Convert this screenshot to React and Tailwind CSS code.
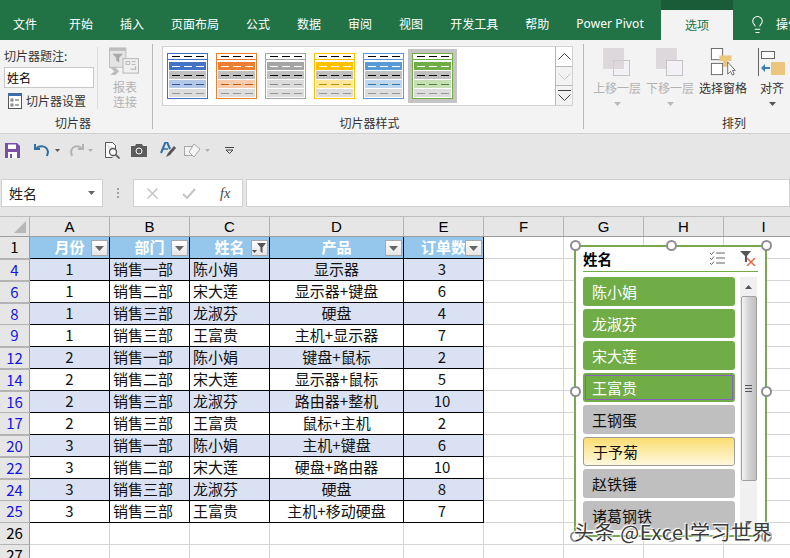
import React from "react";
import { Lightbulb } from "lucide-react";

const tabs = ["开始","插入","页面布局","公式","数据","审阅","视图","开发工具","帮助","Power Pivot"];
const rows = [
  [4,1,"销售一部","陈小娟","显示器",3,1],[6,1,"销售二部","宋大莲","显示器+键盘",6,0],[8,1,"销售三部","龙淑芬","硬盘",4,1],[9,1,"销售三部","王富贵","主机+显示器",7,0],
  [12,2,"销售一部","陈小娟","键盘+鼠标",2,1],[14,2,"销售二部","宋大莲","显示器+鼠标",5,0],[16,2,"销售三部","龙淑芬","路由器+整机",10,1],[17,2,"销售三部","王富贵","鼠标+主机",2,0],
  [20,3,"销售一部","陈小娟","主机+键盘",6,1],[22,3,"销售二部","宋大莲","硬盘+路由器",10,0],[24,3,"销售三部","龙淑芬","硬盘",8,1],[25,3,"销售三部","王富贵","主机+移动硬盘",7,0],
];
const swatches = [
  { b:"#4472c4", c:"#b4c7e7", d:"#2f5597" },
  { b:"#ed7d31", c:"#f8cbad", d:"#c55a11" },
  { b:"#a5a5a5", c:"#dbdbdb", d:"#8a8a8a" },
  { b:"#ffc000", c:"#ffe699", d:"#bf9000" },
  { b:"#5b9bd5", c:"#bdd7ee", d:"#2e75b6" },
  { b:"#70ad47", c:"#c5e0b4", d:"#548235" },
];
const dashes = (color) => (
  <div className="flex justify-center gap-[4px]">
    {[0,1,2].map(i => <span key={i} className="block w-[8px] h-px" style={{ background: color }} />)}
  </div>
);
function Bar({ bg, dash }) {
  return <div className="h-[8px] flex items-center justify-center" style={{ background: bg }}>{dashes(dash)}</div>;
}
function Swatch({ s }) {
  return (
    <div className="w-[41px] h-[46px] border bg-white flex flex-col shrink-0" style={{ borderColor: s.b }}>
      <div className="h-[8px] flex items-center justify-center">{dashes("#000")}</div>
      <div className="h-px" style={{ background: s.b }} />
      <div className="flex flex-col gap-px p-px pt-[2px]">
        <Bar bg={s.b} dash="#fff" />
        <Bar bg="#c0c0c0" dash="#000" />
        <Bar bg={s.c} dash={s.d} />
        <Bar bg="#dcdcdc" dash="#999" />
      </div>
    </div>
  );
}
function FilterBtn({ active }) {
  return (
    <span className="absolute right-px top-[3px] w-[17px] h-[16px] border border-[#a8a8a8] bg-gradient-to-b from-white to-[#e4e4e4] flex items-center justify-center">
      {active ? (
        <svg width="15" height="12" viewBox="0 0 15 12"><path d="M5 1h9L10.5 5.5V11L8.5 9.5v-4z" fill="#555"/><path d="M0 8h5L2.5 11z" fill="#555"/></svg>
      ) : (
        <svg width="9" height="5" viewBox="0 0 9 5"><path d="M0 0h9L4.5 5z" fill="#666"/></svg>
      )}
    </span>
  );
}
const colH = [["A",80],["B",80],["C",80],["D",134],["E",80],["F",80],["G",80],["H",80],["I",80]];
const latin = "font-['Liberation_Sans','Noto_Sans_CJK_SC',sans-serif]";

function EmptyCols() {
  return (
    <>
      <div className="w-[80px] shrink-0 h-full border-r border-b border-[#d4d4d4]" />
      <div className="w-[80px] shrink-0 h-full border-r border-b border-[#d4d4d4]" />
      <div className="w-[80px] shrink-0 h-full border-r border-b border-[#d4d4d4]" />
      <div className="w-[80px] shrink-0 h-full border-b border-r border-[#d4d4d4]" />
    </>
  );
}
function RowHead({ n, blue, gap }) {
  return (
    <div className={`w-[30px] shrink-0 h-full bg-[#e6e6e6] border-r border-r-[#9c9c9c] border-b border-b-[#b4b4b4] flex items-center justify-center text-[15px] ${gap ? "border-t border-t-[#b4b4b4]" : ""} ${blue ? "text-[#1414e6]" : "text-black"}`}>{n}</div>
  );
}
function Pill({ children, variant, mark }) {
  const cls = variant === "on" ? "bg-[#70ad47] text-white rounded-[3px]"
    : variant === "off" ? "bg-[#bfbfbf] text-[#111] rounded-[3px]"
    : "bg-gradient-to-b from-[#fbdd6e] to-[#fff8dc] text-[#111] border border-[#9c9c9c] rounded-[3px]";
  return (
    <div className={`relative h-[29px] shrink-0 flex items-center pl-[9px] pt-[1px] text-[15px] ${cls}`}>
      {mark && <span className="absolute inset-[2px] border border-[#8b5fbf]" />}
      <span className="relative">{children}</span>
    </div>
  );
}
function Handle({ cls }) {
  return <span className={`absolute w-[11px] h-[11px] rounded-full bg-white border-2 border-[#8f8f8f] ${cls}`} />;
}
function Caret({ light }) {
  return <svg width="7" height="4" viewBox="0 0 7 4" className="mt-[6px]"><path d="M0 0h7L3.5 4z" fill={light ? "#b8b8b8" : "#555"} /></svg>;
}

export default function App() {
  return (
    <div className={`relative w-[790px] h-[558px] overflow-hidden bg-white text-black ${latin}`}>
      {/* tab bar */}
      <div className="h-[40px] bg-[#217346] flex text-[12px] text-white whitespace-nowrap font-['Noto_Sans_CJK_SC','Noto_Sans',sans-serif]">
        <div className="pl-[13px] pr-[32px] flex items-center h-full pt-[8px] shrink-0">文件</div>
        <div className="flex items-center gap-[27px] h-full pt-[8px] shrink-0 w-[592px]">
          {tabs.map(t => <span key={t} className={`shrink-0 ${t === "Power Pivot" ? "tracking-[0.1px] font-['Noto_Sans',sans-serif]" : ""}`}>{t}</span>)}
        </div>
        <div className="w-[72px] flex flex-col h-full shrink-0">
          <div className="h-[10px] bg-[#1a5c38]" />
          <div className="flex-1 bg-[#f3f3f3] text-[#217346] flex items-center justify-center">选项</div>
        </div>
        <div className="flex items-center pl-[15px] gap-[9px] pt-[8px] shrink-0">
          <Lightbulb size={19} strokeWidth={1.3} />
          <span>操作</span>
        </div>
      </div>

      {/* ribbon */}
      <div className="h-[94px] bg-[#f3f3f3] border-b border-[#cfcfcf] flex text-[12px] text-[#333] font-['Noto_Sans_CJK_SC',sans-serif]">
        {/* group 1 */}
        <div className="w-[153px] shrink-0 flex flex-col my-[4px] border-r border-[#b8b8b8]">
          <div className="flex h-[65px] pt-[3px]">
            <div className="w-[98px] border-r border-[#dcdcdc] pl-[4px] flex flex-col">
              <div className="leading-[18px]">切片器题注:</div>
              <div className="w-[90px] h-[21px] mt-[2px] bg-white border border-[#c8c8c8] pl-[2px] text-[12px] leading-[19px] text-black">姓名</div>
              <div className="flex items-center gap-[4px] mt-[4px] pl-[4px]">
                <svg width="14" height="16" viewBox="0 0 14 16"><rect x=".5" y=".5" width="13" height="15" fill="#fff" stroke="#555"/><rect x="0" y="0" width="14" height="3" fill="#3d6da8"/><rect x="3" y="6" width="2" height="2" fill="none" stroke="#555" strokeWidth=".8"/><rect x="3" y="11" width="2" height="2" fill="none" stroke="#555" strokeWidth=".8"/><path d="M7 7h4M7 12h4" stroke="#555"/></svg>
                <span>切片器设置</span>
              </div>
            </div>
            <div className="flex-1 flex flex-col items-center text-[#b2b2b2] leading-[15px]">
              <svg width="32" height="30" viewBox="0 0 32 30" className="mb-[3px] mr-[2px]">
                <rect x="1" y="1" width="17" height="20" fill="#e4e4e4" stroke="#bdbdbd" /><rect x="1" y="1" width="17" height="3" fill="#bdbdbd"/>
                <path d="M4 7h11l-4 4v5l-3-2v-3z" fill="#a8a8a8"/>
                <rect x="15" y="12" width="16" height="15" fill="#efefef" stroke="#b5b5b5"/><path d="M18 15h4v3h-4zM24 15h4M24 18h4" stroke="#b5b5b5" fill="none"/><path d="M28 20v3h-5" stroke="#a8a8a8" fill="none"/>
                <path d="M1 21h6l4 4-4 4H2l4-4z" fill="#bdbdbd"/>
              </svg>
              <span>报表</span><span>连接</span>
            </div>
          </div>
          <div className="text-center pr-[6px] mt-auto leading-[12px]">切片器</div>
        </div>
        {/* group 2 */}
        <div className="w-[431px] shrink-0 flex flex-col my-[4px] border-r border-[#b8b8b8] pl-[9px]">
          <div className="flex h-[60px] mt-[2px] w-[411px] bg-white border border-[#d2d2d2]">
            <div className="flex-1 flex items-center pl-[4px] gap-[8px]">
              {swatches.slice(0,5).map(s => <Swatch key={s.b} s={s} />)}
              <div className="w-[49px] h-[54px] -ml-[4px] bg-[#c4c4c4] flex items-center justify-center"><Swatch s={swatches[5]} /></div>
            </div>
            <div className="w-[17px] flex flex-col border-l border-[#b8b8b8]">
              <div className="h-[20px] border-b border-[#b8b8b8] flex items-center justify-center"><svg width="13" height="7" viewBox="0 0 13 7"><path d="M.5 6.5l6-6 6 6" fill="none" stroke="#444"/></svg></div>
              <div className="h-[19px] bg-[#f3f3f3] border-b border-[#b8b8b8] flex items-center justify-center"><svg width="13" height="7" viewBox="0 0 13 7"><path d="M.5 .5l6 6 6-6" fill="none" stroke="#c8c8c8"/></svg></div>
              <div className="flex-1 bg-[#f3f3f3] flex flex-col items-center justify-center gap-[3px]"><span className="block w-[13px] h-px bg-[#444]"/><svg width="13" height="7" viewBox="0 0 13 7"><path d="M.5 .5l6 6 6-6" fill="none" stroke="#444"/></svg></div>
            </div>
          </div>
          <div className="text-center pr-[6px] mt-auto leading-[12px]">切片器样式</div>
        </div>
        {/* group 3 */}
        <div className="flex-1 flex flex-col my-[4px] relative">
          <div className="flex h-[65px] pl-[9px] gap-[5px] pt-[4px] text-[#b2b2b2] leading-[16px]">
            <div className="w-[48px] flex flex-col items-center shrink-0">
              <svg width="28" height="28" viewBox="0 0 28 28"><rect x="0" y="0" width="21" height="21" fill="#dcd8dc"/><rect x="10.500" y="12.500" width="16" height="15" fill="#f4f1f6" stroke="#c4c2c4"/><rect x="10.500" y="12.500" width="10.500" height="8.500" fill="#dcd8dc"/></svg>
              <span className="whitespace-nowrap mt-[4px]">上移一层</span><Caret light />
            </div>
            <div className="w-[48px] flex flex-col items-center shrink-0">
              <svg width="28" height="28" viewBox="0 0 28 28"><rect x="0" y="0" width="21" height="21" fill="#dcd8dc"/><rect x="10.500" y="12.500" width="16" height="15" fill="#f4f1f6" stroke="#c4c2c4"/></svg>
              <span className="whitespace-nowrap mt-[4px]">下移一层</span><Caret light />
            </div>
            <div className="w-[48px] flex flex-col items-center shrink-0 text-[#333]">
              <svg width="28" height="28" viewBox="0 0 28 30" className="ml-[1px]"><rect x=".5" y=".5" width="12" height="12" fill="#fff" stroke="#666"/><rect x=".5" y="16.500" width="12" height="12" fill="#fff" stroke="#666"/><path d="M9 8h13v6h-4v6h-5v-6H9z" fill="#ecc67c"/><path d="M18 15v13l3-3 2 4 2-1-2-4h3z" fill="#fff" stroke="#666"/></svg>
              <span className="whitespace-nowrap mt-[4px]">选择窗格</span>
            </div>
            <div className="w-[32px] flex flex-col items-center shrink-0 text-[#333] ml-[4px]">
              <svg width="28" height="28" viewBox="0 0 28 28"><path d="M.5 0v28" stroke="#666"/><rect x="3.500" y="3.500" width="13" height="7" fill="#fff" stroke="#666"/><rect x="13" y="14" width="14" height="13" fill="#ecc67c"/><path d="M3 20l4-4v3h5v2H7v3z" fill="#3d7dbd"/></svg>
              <span className="mt-[4px]">对齐</span><Caret />
            </div>
          </div>
          <div className="absolute left-[138px] bottom-0 leading-[12px]">排列</div>
        </div>
      </div>

      {/* below ribbon */}
      <div className="h-[83px] bg-[#e6e6e6] border-b border-[#bdbdbd] flex flex-col">
        <div className="h-[32px] flex items-center pl-[5px] shrink-0">
          <svg width="15" height="15" viewBox="0 0 15 15"><path d="M0 0h12l3 3v12H0z" fill="#7b4fa6"/><rect x="3" y="1.500" width="8" height="4.500" fill="#fff"/><rect x="3" y="9" width="9" height="6" fill="#fff"/><rect x="5" y="11" width="2" height="4" fill="#7b4fa6"/></svg>
          <svg width="17" height="14" viewBox="0 0 17 14" className="ml-[14px]"><path d="M1 1v5h5" fill="none" stroke="#2f6ea5" strokeWidth="2"/><path d="M2 6c3-4 11-4 12 3l-1 4" fill="none" stroke="#2f6ea5" strokeWidth="2"/></svg>
          <svg width="5" height="3" viewBox="0 0 5 3" className="ml-[4px]"><path d="M0 0h5L2.500 3z" fill="#555"/></svg>
          <svg width="15" height="14" viewBox="0 0 15 14" className="ml-[9px]"><path d="M14 1v5H9" fill="none" stroke="#b2b2b2" strokeWidth="2"/><path d="M13 6C10 2 3 2 2 9l1 4" fill="none" stroke="#b2b2b2" strokeWidth="2"/></svg>
          <svg width="5" height="3" viewBox="0 0 5 3" className="ml-[4px]"><path d="M0 0h5L2.500 3z" fill="#b2b2b2"/></svg>
          <svg width="15" height="17" viewBox="0 0 15 17" className="ml-[12px]"><path d="M.5.500h7l3 3v4M.5.500v15h7" fill="#fff" stroke="#555"/><circle cx="8" cy="10" r="3.500" fill="#fff" stroke="#555" strokeWidth="1.300"/><path d="M10.500 12.500l4 4" stroke="#555" strokeWidth="1.600"/></svg>
          <svg width="16" height="13" viewBox="0 0 16 13" className="ml-[11px]"><path d="M0 2h4l1-2h6l1 2h4v11H0z" fill="#5c5c5c"/><circle cx="8" cy="7" r="3" fill="#5c5c5c" stroke="#fff"/></svg>
          <svg width="16" height="16" viewBox="0 0 16 16" className="ml-[13px]"><path d="M1 11L5.500 0h1.500l3 7" fill="none" stroke="#2f6ea5" strokeWidth="2"/><path d="M3 7h5" stroke="#2f6ea5" strokeWidth="1.500"/><path d="M6 15l2-4 6-7 2 2-6 7z" fill="#555"/></svg>
          <svg width="17" height="15" viewBox="0 0 17 15" className="ml-[8px]"><rect x=".5" y="3.500" width="9" height="9" fill="#f4f4f4" stroke="#a8a8a8"/><path d="M10 1l6 5-6 8-5-5z" fill="#f4f4f4" stroke="#a8a8a8"/></svg>
          <svg width="5" height="3" viewBox="0 0 5 3" className="ml-[4px]"><path d="M0 0h5L2.500 3z" fill="#b2b2b2"/></svg>
          <svg width="9" height="7" viewBox="0 0 9 7" className="ml-[15px]"><path d="M0 .5h9" stroke="#444"/><path d="M1 3h7L4.500 6.500z" fill="none" stroke="#444"/></svg>
        </div>
        <div className="h-[13px] shrink-0" />
        <div className="flex h-[28px] shrink-0 font-['Noto_Sans_CJK_SC',sans-serif]">
          <div className="ml-px w-[102px] bg-white border border-[#d0d0d0] flex items-center justify-between pl-[7px] pr-[7px] text-[14px] text-[#222]">
            <span>姓名</span>
            <svg width="7" height="4" viewBox="0 0 7 4"><path d="M0 0h7L3.500 4z" fill="#666"/></svg>
          </div>
          <div className="w-[30px] flex flex-col items-center justify-center gap-[2px]">
            {[0,1,2].map(i => <span key={i} className="block w-[2px] h-[2px] bg-[#a0a0a0]" />)}
          </div>
          <div className="w-[110px] bg-white border border-[#d0d0d0] flex items-center pl-[13px] gap-[24px]">
            <svg width="11" height="11" viewBox="0 0 11 11"><path d="M.5.500l10 10M10.500.500l-10 10" stroke="#c4c4c4" strokeWidth="1.500"/></svg>
            <svg width="14" height="11" viewBox="0 0 14 11"><path d="M1 6l4 4 8-9" fill="none" stroke="#c4c4c4" strokeWidth="2"/></svg>
            <span className="font-['Liberation_Serif',serif] italic text-[14px] text-[#444]">fx</span>
          </div>
          <div className="ml-[3px] flex-1 bg-white border border-[#d0d0d0]" />
        </div>
      </div>

      {/* column headers */}
      <div className="h-[20px] flex w-[804px] bg-[#e6e6e6] border-b border-[#9c9c9c] text-[15px]">
        <div className="w-[30px] shrink-0 h-full border-r border-[#b4b4b4] flex items-end justify-end pr-[3px] pb-[3px]">
          <svg width="12" height="12" viewBox="0 0 12 12"><path d="M12 0v12H0z" fill="#b8b8b8"/></svg>
        </div>
        {colH.map(([c,w]) => (
          <div key={c} className="h-full shrink-0 border-r border-[#b4b4b4] flex items-center justify-center pt-[1px]" style={{ width: w }}>{c}</div>
        ))}
      </div>

      {/* sheet */}
      <div className="w-[804px] font-['Noto_Sans_CJK_SC',sans-serif]">
        <div className="flex h-[22px]">
          <RowHead n={1} />
          {[["月份",80],["部门",80],["姓名",80],["产品",134],["订单数",80]].map(([h,w],i) => (
            <div key={h} className="relative h-full shrink-0 bg-[#95c7ec] border-r border-b border-black flex items-center justify-center text-white font-bold text-[15px]" style={{ width: w }}>
              {h}<FilterBtn active={i === 2} />
            </div>
          ))}
          <EmptyCols />
        </div>
        {rows.map((r) => {
          const bg = r[6] ? "bg-[#d9e1f2]" : "bg-white";
          const gap = [4,6,8,12,14,16,20,22,24].includes(r[0]);
          const base = `h-full shrink-0 border-r border-b border-black flex items-center text-[15px] text-[#111] ${bg}`;
          return (
            <div key={r[0]} className="flex h-[22px]">
              <RowHead n={r[0]} blue gap={gap} />
              <div className={`${base} w-[80px] justify-center`}>{r[1]}</div>
              <div className={`${base} w-[80px] pl-[3px]`}>{r[2]}</div>
              <div className={`${base} w-[80px] pl-[3px]`}>{r[3]}</div>
              <div className={`${base} w-[134px] justify-center`}>{r[4]}</div>
              <div className={`${base} w-[80px] justify-center pr-[3px]`}>{r[5]}</div>
              <EmptyCols />
            </div>
          );
        })}
        {[26,27].map(n => (
          <div key={n} className="flex h-[22px]">
            <RowHead n={n} />
            <div className="w-[80px] shrink-0 h-full border-r border-b border-[#d4d4d4]" />
            <div className="w-[80px] shrink-0 h-full border-r border-b border-[#d4d4d4]" />
            <div className="w-[80px] shrink-0 h-full border-r border-b border-[#d4d4d4]" />
            <div className="w-[134px] shrink-0 h-full border-r border-b border-[#d4d4d4]" />
            <div className="w-[80px] shrink-0 h-full border-r border-b border-[#d4d4d4]" />
            <EmptyCols />
          </div>
        ))}
      </div>

      {/* slicer */}
      <div className="absolute left-[574px] top-[245px] w-[193px] h-[292px] bg-white border-2 border-[#78a84f] font-['Noto_Sans_CJK_SC',sans-serif]">
        <div className="ml-[7px] mr-[7px] h-[25px] border-b border-[#70ad47] flex items-center justify-between">
          <span className="text-[14.5px] font-bold">姓名</span>
          <div className="flex items-center gap-[14px] pr-[2px] -mt-[2px]">
            <svg width="17" height="14" viewBox="0 0 17 14"><path d="M1 2l1.500 1.500L5 .500M1 7l1.500 1.500L5 5.500M1 12l1.500 1.500L5 10.500" fill="none" stroke="#666"/><path d="M7 2h9M7 7h9M7 12h9" stroke="#666"/></svg>
            <svg width="16" height="15" viewBox="0 0 16 15"><path d="M0 0h11L7 5v6H5V5z" fill="#555"/><path d="M7 7l8 8M15 7l-8 8" stroke="#e2674a" strokeWidth="1.500"/></svg>
          </div>
        </div>
        <div className="flex ml-[7px] mt-[5px] h-[253px] overflow-hidden">
          <div className="w-[152px] flex flex-col gap-[3px]">
            <Pill variant="on">陈小娟</Pill>
            <Pill variant="on">龙淑芬</Pill>
            <Pill variant="on">宋大莲</Pill>
            <Pill variant="on" mark>王富贵</Pill>
            <Pill variant="off">王钢蛋</Pill>
            <Pill variant="hover">于予菊</Pill>
            <Pill variant="off">赵铁锤</Pill>
            <Pill variant="off">诸葛钢铁</Pill>
          </div>
          <div className="ml-[5px] w-[17px] bg-[#f0f0f0] flex flex-col items-center">
            <div className="h-[19px] flex items-center justify-center shrink-0"><svg width="7" height="4" viewBox="0 0 7 4"><path d="M3.500 0L7 4H0z" fill="#555"/></svg></div>
            <div className="w-[16px] h-[185px] shrink-0 rounded-[2px] border border-[#a0a0a0] bg-gradient-to-r from-[#f4f4f4] via-[#d2d2d2] to-[#c0c0c0] flex flex-col items-center justify-center gap-[2px]">
              {[0,1,2].map(i => <span key={i} className="block w-[7px] h-px bg-[#555]" />)}
            </div>
            <div className="mt-auto h-[15px] flex items-center"><svg width="7" height="4" viewBox="0 0 7 4"><path d="M0 0h7L3.500 4z" fill="#555"/></svg></div>
          </div>
        </div>
        <Handle cls="-left-[6px] -top-[7px]" />
        <Handle cls="left-[90px] -top-[7px]" />
        <Handle cls="-right-[7px] -top-[7px]" />
        <Handle cls="-left-[6px] top-[139px]" />
        <Handle cls="-right-[7px] top-[139px]" />
        <Handle cls="-left-[6px] -bottom-[7px]" />
        <Handle cls="left-[90px] -bottom-[7px]" />
        <Handle cls="-right-[7px] -bottom-[7px]" />
      </div>

      {/* watermark */}
      <div className="absolute left-[574px] top-[518px] whitespace-nowrap text-[20px] tracking-[0.6px] leading-[28px] text-[#3a3a3a] font-['Noto_Sans_CJK_SC',sans-serif] [text-shadow:0_0_2px_#fff,1px_1px_1px_#fff,-1px_-1px_1px_#fff]">
        头条 @Excel学习世界
      </div>
    </div>
  );
}
